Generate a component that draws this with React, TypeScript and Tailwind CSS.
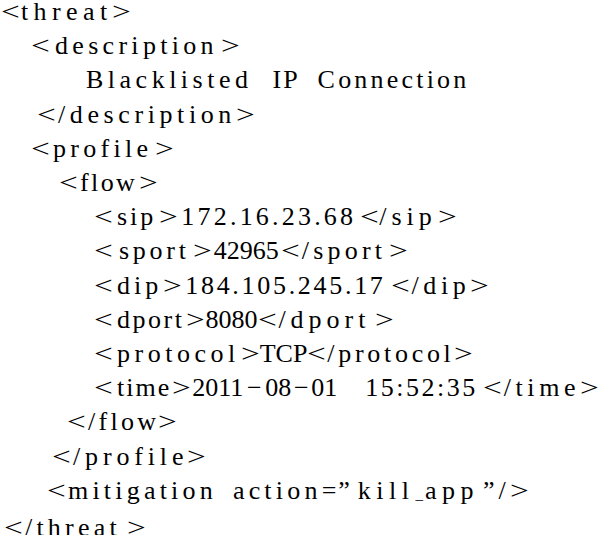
import React from "react";

const LT = ({ c = "" }: { c?: string }) => (
  <span className={`inline-block w-[17px] text-center scale-x-[1.28] ${c}`}>&lt;</span>
);
const GT = ({ c = "" }: { c?: string }) => (
  <span className={`inline-block w-[17px] text-center scale-x-[1.28] ${c}`}>&gt;</span>
);
const M = ({ c = "" }: { c?: string }) => (
  <span className={`inline-block w-[16px] text-center ${c}`}>−</span>
);
const T = ({ c = "", children }: { c?: string; children: React.ReactNode }) => (
  <span className={`inline-block ${c}`}>{children}</span>
);

export default function App() {
  return (
    <div className="w-[600px] h-[535px] overflow-hidden bg-white text-black font-['Liberation_Serif'] text-[26px] leading-[34.2px]">
      <div className="mt-[-5px] whitespace-nowrap">
        <div className="pl-[2px]">
          <LT />
          <T c="ml-[2px] tracking-[5.4px]">threat</T>
          <GT />
        </div>
        <div className="pl-[32px]">
          <LT />
          <T c="ml-[6px] tracking-[4.3px]">description</T>
          <GT c="ml-[4px]" />
        </div>
        <div className="pl-[86px]">
          <T c="tracking-[4.5px]">Blacklisted</T>
          <T c="ml-[20px] tracking-[2px]">IP</T>
          <T c="ml-[18px] tracking-[3.2px]">Connection</T>
        </div>
        <div className="pl-[38px]">
          <LT />
          <T c="ml-[3px] tracking-[4.6px]">/description</T>
          <GT c="ml-[1px]" />
        </div>
        <div className="pl-[32px]">
          <LT />
          <T c="ml-[4px] tracking-[4.3px]">profile</T>
          <GT c="ml-[4px]" />
        </div>
        <div className="pl-[60px]">
          <LT />
          <T c="ml-[3px] tracking-[2.4px]">flow</T>
          <GT c="ml-[3px]" />
        </div>
        <div className="pl-[95px]">
          <LT />
          <T c="ml-[5px] tracking-[3px]">sip</T>
          <GT c="ml-[4px]" />
          <T c="ml-[4px] tracking-[3.2px]">172.16.23.68</T>
          <LT c="ml-[5px]" />
          <T c="ml-[1px] tracking-[5px]">/sip</T>
          <GT c="ml-[2px]" />
        </div>
        <div className="pl-[95px]">
          <LT />
          <T c="ml-[7px] tracking-[3.75px]">sport</T>
          <GT c="ml-[4px]" />
          <T c="ml-[3px]">42965</T>
          <LT c="ml-[3px]" />
          <T c="ml-[3px] tracking-[4.2px]">/sport</T>
          <GT c="ml-[4px]" />
        </div>
        <div className="pl-[95px]">
          <LT />
          <T c="ml-[5px] tracking-[4px]">dip</T>
          <GT c="ml-[2px]" />
          <T c="ml-[4px] tracking-[2.7px]">184.105.245.17</T>
          <LT c="ml-[6px]" />
          <T c="ml-[3px] tracking-[4.6px]">/dip</T>
          <GT c="ml-[1px]" />
        </div>
        <div className="pl-[95px]">
          <LT />
          <T c="ml-[5px] tracking-[2.5px]">dport</T>
          <GT c="ml-[3px]" />
          <T c="ml-[1px]">8080</T>
          <LT c="ml-[2px]" />
          <T c="ml-[2px] tracking-[5px]">/dport</T>
          <GT c="ml-[5px]" />
        </div>
        <div className="pl-[95px]">
          <LT />
          <T c="ml-[5px] tracking-[4.5px]">protocol</T>
          <GT c="ml-[2px]" />
          <T c="ml-[1px]">TCP</T>
          <LT c="ml-[1px]" />
          <T c="ml-[2px] tracking-[3.7px]">/protocol</T>
          <GT />
        </div>
        <div className="pl-[95px]">
          <LT />
          <T c="ml-[5px] tracking-[2px]">time</T>
          <GT c="ml-[2px]" />
          <T c="ml-[2px]">2011</T>
          <M c="ml-[3px]" />
          <T c="ml-[3px]">08</T>
          <M c="ml-[2px]" />
          <T c="ml-[2px]">01</T>
          <T c="ml-[28px] tracking-[2.5px]">15:52:35</T>
          <LT c="ml-[6px]" />
          <T c="ml-[3px] tracking-[4.6px]">/time</T>
          <GT c="ml-[1px]" />
        </div>
        <div className="pl-[68px]">
          <LT />
          <T c="ml-[3px] tracking-[3.3px]">/flow</T>
          <GT />
        </div>
        <div className="pl-[53px]">
          <LT />
          <T c="ml-[3px] tracking-[4.85px]">/profile</T>
          <GT />
        </div>
        <div className="pl-[48px]">
          <LT />
          <T c="ml-[3px] tracking-[4.2px]">mitigation</T>
          <T c="ml-[16px] tracking-[4.2px]">action</T>
          <T>=</T>
          <T c="ml-[2px]">”</T>
          <T c="ml-[8px] tracking-[5.5px]">kill</T>
          <T c="ml-[1px] text-[15px]">_</T>
          <T c="ml-[2px] tracking-[5.5px]">app</T>
          <T c="ml-[4px]">”</T>
          <T c="ml-[4px]">/</T>
          <GT c="ml-[5px]" />
        </div>
        <div className="pl-[5px]">
          <LT />
          <T c="ml-[3px] tracking-[4.2px]">/threat</T>
          <GT c="ml-[7px]" />
        </div>
      </div>
    </div>
  );
}
